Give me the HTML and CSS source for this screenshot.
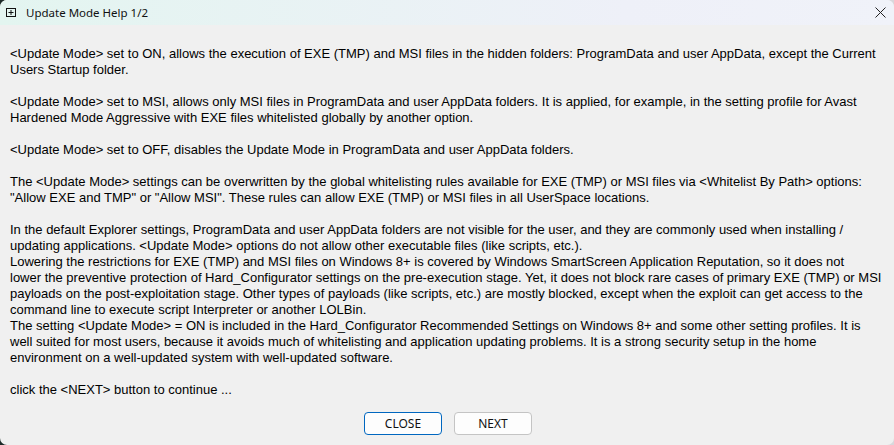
FILE: index.html
```html
<!DOCTYPE html>
<html lang="en">
<head>
    <meta charset="UTF-8">
    <meta name="viewport" content="width=device-width, initial-scale=1.0">
    <title>Update Mode Help 1/2</title>
    <link rel="stylesheet" href="styles.css">
</head>
<body>
    <div class="window">
        <div class="titlebar">
            <svg class="app-icon" width="10" height="9" viewBox="0 0 10 9">
                <rect x="0.5" y="0.5" width="9" height="8" fill="none" stroke="#111"/>
                <path d="M5 2v5M2.5 4.5h5" stroke="#111" fill="none"/>
            </svg>
            <span class="title">Update Mode Help 1/2</span>
            <svg class="close-x" width="11" height="11" viewBox="0 0 11 11">
                <path d="M0.5 0.5l10 10M10.5 0.5l-10 10" stroke="#222" fill="none"/>
            </svg>
        </div>
        <div class="help-text">
            <p>&lt;Update Mode&gt; set to ON, allows the execution of EXE (TMP) and MSI files in the hidden folders: ProgramData and user AppData, except the Current<br>Users Startup folder.</p>
            <p>&lt;Update Mode&gt; set to MSI, allows only MSI files in ProgramData and user AppData folders. It is applied, for example, in the setting profile for Avast<br>Hardened Mode Aggressive with EXE files whitelisted globally by another option.</p>
            <p>&lt;Update Mode&gt; set to OFF, disables the Update Mode in ProgramData and user AppData folders.</p>
            <p>The &lt;Update Mode&gt; settings can be overwritten by the global whitelisting rules available for EXE (TMP) or MSI files via &lt;Whitelist By Path&gt; options:<br>"Allow EXE and TMP" or "Allow MSI". These rules can allow EXE (TMP) or MSI files in all UserSpace locations.</p>
            <p>In the default Explorer settings, ProgramData and user AppData folders are not visible for the user, and they are commonly used when installing /<br>updating applications. &lt;Update Mode&gt; options do not allow other executable files (like scripts, etc.).<br>Lowering the restrictions for EXE (TMP) and MSI files on Windows 8+ is covered by Windows SmartScreen Application Reputation, so it does not<br>lower the preventive protection of Hard_Configurator settings on the pre-execution stage. Yet, it does not block rare cases of primary EXE (TMP) or MSI<br>payloads on the post-exploitation stage. Other types of payloads (like scripts, etc.) are mostly blocked, except when the exploit can get access to the<br>command line to execute script Interpreter or another LOLBin.<br>The setting &lt;Update Mode&gt; = ON is included in the Hard_Configurator Recommended Settings on Windows 8+ and some other setting profiles. It is<br>well suited for most users, because it avoids much of whitelisting and application updating problems. It is a strong security setup in the home<br>environment on a well-updated system with well-updated software.</p>
            <p>click the &lt;NEXT&gt; button to continue ...</p>
        </div>
        <div class="buttons">
            <button class="focused">CLOSE</button>
            <button>NEXT</button>
        </div>
    </div>
</body>
</html>
```
FILE: styles.css
```css
body {
    margin: 0;
    background: linear-gradient(90deg, #1c2b28 20px, #d8d8dc 20px);
    font-family: "Liberation Sans", Arial, sans-serif;
    color: #000;
}
.window {
    display: flex;
    flex-direction: column;
    height: 445px;
    overflow: hidden;
    background-color: #f0f0f0;
    border-radius: 7px;
}
.titlebar {
    display: flex;
    align-items: center;
    height: 25px;
    padding: 0 8px 0 6px;
    background: linear-gradient(90deg, #e3f5f0, #eef0f8 70%, #f0f2f9);
    font-family: "Noto Sans", sans-serif;
    font-size: 11.5px;
}
.app-icon {
    margin-right: 10px;
}
.title {
    flex: 1;
    color: #111;
}
.help-text {
    padding: 21px 10px 0;
    font-size: 13px;
    line-height: 16px;
    white-space: nowrap;
}
.help-text p {
    margin: 0 0 16px;
}
.buttons {
    display: flex;
    justify-content: center;
    gap: 12px;
    margin-top: -2px;
    padding-left: 2px;
}
button {
    width: 78px;
    height: 23px;
    padding: 0;
    background-color: #fdfdfd;
    border: 1px solid #c4c4c4;
    border-radius: 4px;
    font-family: "Noto Sans", sans-serif;
    font-size: 12px;
    color: #111;
}
button.focused {
    border: 1.5px solid #0067c0;
}
```
